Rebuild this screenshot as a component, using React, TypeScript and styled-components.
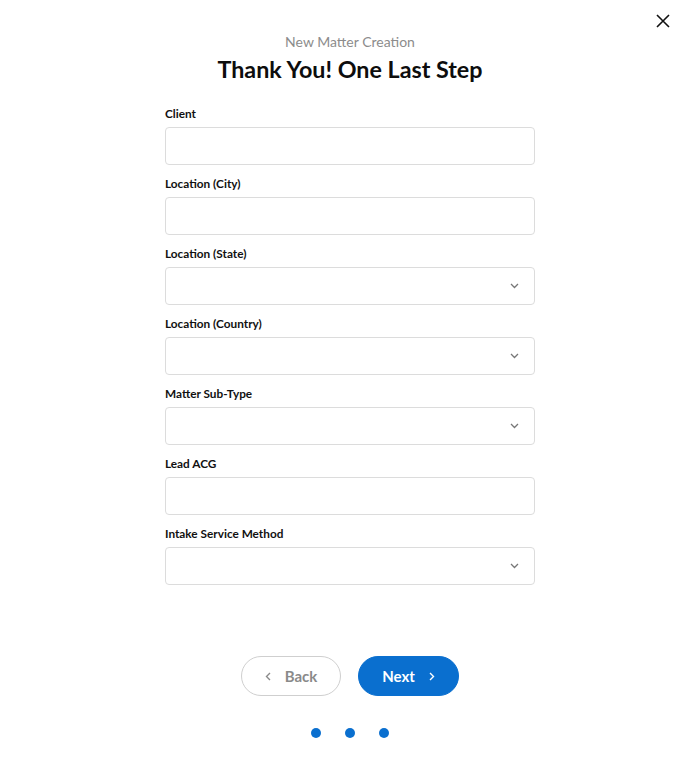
import styled, { createGlobalStyle } from 'styled-components';

const GlobalStyle = createGlobalStyle`
  body {
    margin: 0;
    background: #ffffff;
    font-family: Lato, "Noto Sans", sans-serif;
    color: #111111;
  }
`;

const StyledElement = styled.div`
  &.Modal {
    position: relative;
    width: 700px;
    height: 777px;
    box-sizing: border-box;
    padding-top: 34px;
    display: flex;
    flex-direction: column;
    align-items: center;
  }
  .Modal__Close {
    position: absolute;
    top: 14px;
    right: 30px;
    width: 14px;
    height: 14px;
    padding: 0;
    border: none;
    background: none;
    cursor: pointer;
  }
  .Modal__Subtitle {
    margin: 0;
    font-size: 14px;
    line-height: 16px;
    color: #8c8c8c;
  }
  .Modal__Title {
    margin: 4px 0 0;
    font-size: 23.3px;
    line-height: 30px;
    font-weight: 700;
    color: #0d0d0d;
  }
  .Modal__Form {
    width: 370px;
    margin-top: 23px;
    display: flex;
    flex-direction: column;
    gap: 12px;
  }
  .Modal__Actions {
    margin-top: 71px;
    display: flex;
    gap: 17px;
  }
  .Modal__Dots {
    margin-top: 32px;
    display: flex;
    gap: 24px;
  }
`;

const Field = styled.label`
  display: flex;
  flex-direction: column;
  gap: 6px;
`;

const Label = styled.span`
  font-size: 11.8px;
  line-height: 14px;
  font-weight: 700;
  color: #111111;
`;

const InputBox = styled.div`
  position: relative;
  height: 38px;
  box-sizing: border-box;
  border: 1px solid #dcdcdc;
  border-radius: 4px;
  background: #ffffff;
`;

const Chevron = styled.svg`
  position: absolute;
  right: 15px;
  top: 15px;
`;

const Button = styled.button<{ $primary?: boolean }>`
  width: ${(p) => (p.$primary ? '101px' : '100px')};
  height: 40px;
  box-sizing: border-box;
  border-radius: 20px;
  border: 1px solid ${(p) => (p.$primary ? '#0a6fcf' : '#cfcfcf')};
  background: ${(p) => (p.$primary ? '#0a6fcf' : '#ffffff')};
  color: ${(p) => (p.$primary ? '#ffffff' : '#8a8a8a')};
  font-family: Lato, "Noto Sans", sans-serif;
  font-size: 15px;
  font-weight: 700;
  display: flex;
  align-items: center;
  justify-content: center;
  gap: 14px;
  cursor: pointer;
`;

const Dot = styled.span`
  width: 10px;
  height: 10px;
  border-radius: 50%;
  background: #0a6fcf;
`;

const fields: { label: string; select?: boolean }[] = [
  { label: 'Client' },
  { label: 'Location (City)' },
  { label: 'Location (State)', select: true },
  { label: 'Location (Country)', select: true },
  { label: 'Matter Sub-Type', select: true },
  { label: 'Lead ACG' },
  { label: 'Intake Service Method', select: true },
];

const App = () => (
  <>
    <GlobalStyle />
    <StyledElement className="Modal">
      <button type="button" className="Modal__Close" aria-label="Close">
        <svg width="14" height="14" viewBox="0 0 14 14">
          <path d="M1 1L13 13M13 1L1 13" stroke="#111" strokeWidth="1.6" />
        </svg>
      </button>
      <p className="Modal__Subtitle">New Matter Creation</p>
      <h1 className="Modal__Title">Thank You! One Last Step</h1>
      <div className="Modal__Form">
        {fields.map((f) => (
          <Field key={f.label}>
            <Label>{f.label}</Label>
            <InputBox>
              {f.select && (
                <Chevron width="9" height="6" viewBox="0 0 9 6">
                  <path d="M1 1L4.5 4.5L8 1" fill="none" stroke="#777" strokeWidth="1.3" />
                </Chevron>
              )}
            </InputBox>
          </Field>
        ))}
      </div>
      <div className="Modal__Actions">
        <Button type="button">
          <svg width="6" height="9" viewBox="0 0 6 9">
            <path d="M5 1L1.5 4.5L5 8" fill="none" stroke="#8a8a8a" strokeWidth="1.4" />
          </svg>
          Back
        </Button>
        <Button type="button" $primary>
          Next
          <svg width="6" height="9" viewBox="0 0 6 9">
            <path d="M1 1L4.5 4.5L1 8" fill="none" stroke="#ffffff" strokeWidth="1.4" />
          </svg>
        </Button>
      </div>
      <div className="Modal__Dots">
        <Dot />
        <Dot />
        <Dot />
      </div>
    </StyledElement>
  </>
);

export default App;
